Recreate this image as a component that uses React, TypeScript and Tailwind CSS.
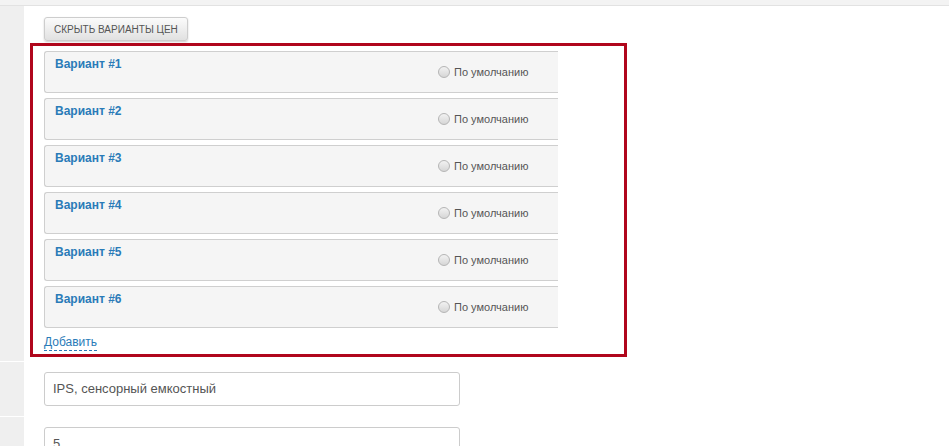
import React from 'react';

const variants = [1, 2, 3, 4, 5, 6];

function Radio() {
  return (
    <span className="inline-block w-[12px] h-[12px] rounded-full border border-[#b5b5b5] bg-gradient-to-b from-[#f2f2f2] to-[#d6d6d6]" />
  );
}

function VariantCard({ n }: { n: number }) {
  return (
    <div className="flex h-[42px] w-[514px] rounded-l-[3px] border border-r-0 border-[#cfcfcf] bg-[#f5f5f5]">
      <div className="w-[393px] pl-[10px] pt-[4px] text-[12px] font-bold leading-[16px] text-[#2a7bb8]">
        Вариант #{n}
      </div>
      <label className="flex items-center gap-[4px] text-[11px] text-[#555]">
        <Radio />
        <span>По умолчанию</span>
      </label>
    </div>
  );
}

export default function App() {
  return (
    <div className="w-[949px] h-[446px] overflow-hidden bg-white font-['Liberation_Sans',Arial,sans-serif]">
      <div className="h-[6px] bg-[#f3f3f3] border-b border-[#e2e2e2]" />

      {/* variants row */}
      <div className="flex h-[355px]">
        <div className="w-[24px] bg-[#efefef]" />
        <div className="flex-1 pl-[6px] pt-[11px]">
          <button className="block ml-[14px] h-[24px] px-[9px] rounded-[3px] border border-[#cdcdcd] bg-gradient-to-b from-[#fbfbfb] to-[#e1e1e1] text-[10px] uppercase text-[#555] shadow-[0_1px_2px_rgba(0,0,0,0.2)]">
            Скрыть варианты цен
          </button>
          <div className="mt-[2px] w-[597px] h-[314px] border-[3px] border-[#b0061c] pl-[11px] pt-[5px]">
            <div className="flex flex-col gap-[5px]">
              {variants.map(n => (
                <VariantCard key={n} n={n} />
              ))}
            </div>
            <a className="mt-[7px] inline-block text-[12px] leading-[15px] text-[#2a7bb8] border-b border-dashed border-[#2a7bb8]">
              Добавить
            </a>
          </div>
        </div>
      </div>

      <div className="flex h-[55px] border-t border-white">
        <div className="w-[24px] bg-[#efefef]" />
        <div className="flex-1 pl-[20px] pt-[10px]">
          <div className="w-[416px] h-[34px] rounded-[3px] border border-[#cccccc] px-[8px] flex items-center text-[13px] text-[#555]">
            IPS, сенсорный емкостный
          </div>
        </div>
      </div>

      <div className="flex h-[40px] border-t border-white">
        <div className="w-[24px] bg-[#efefef]" />
        <div className="flex-1 pl-[20px] pt-[10px]">
          <div className="w-[416px] h-[34px] rounded-[3px] border border-[#cccccc] px-[8px] flex items-center text-[13px] text-[#555]">
            5
          </div>
        </div>
      </div>
    </div>
  );
}
